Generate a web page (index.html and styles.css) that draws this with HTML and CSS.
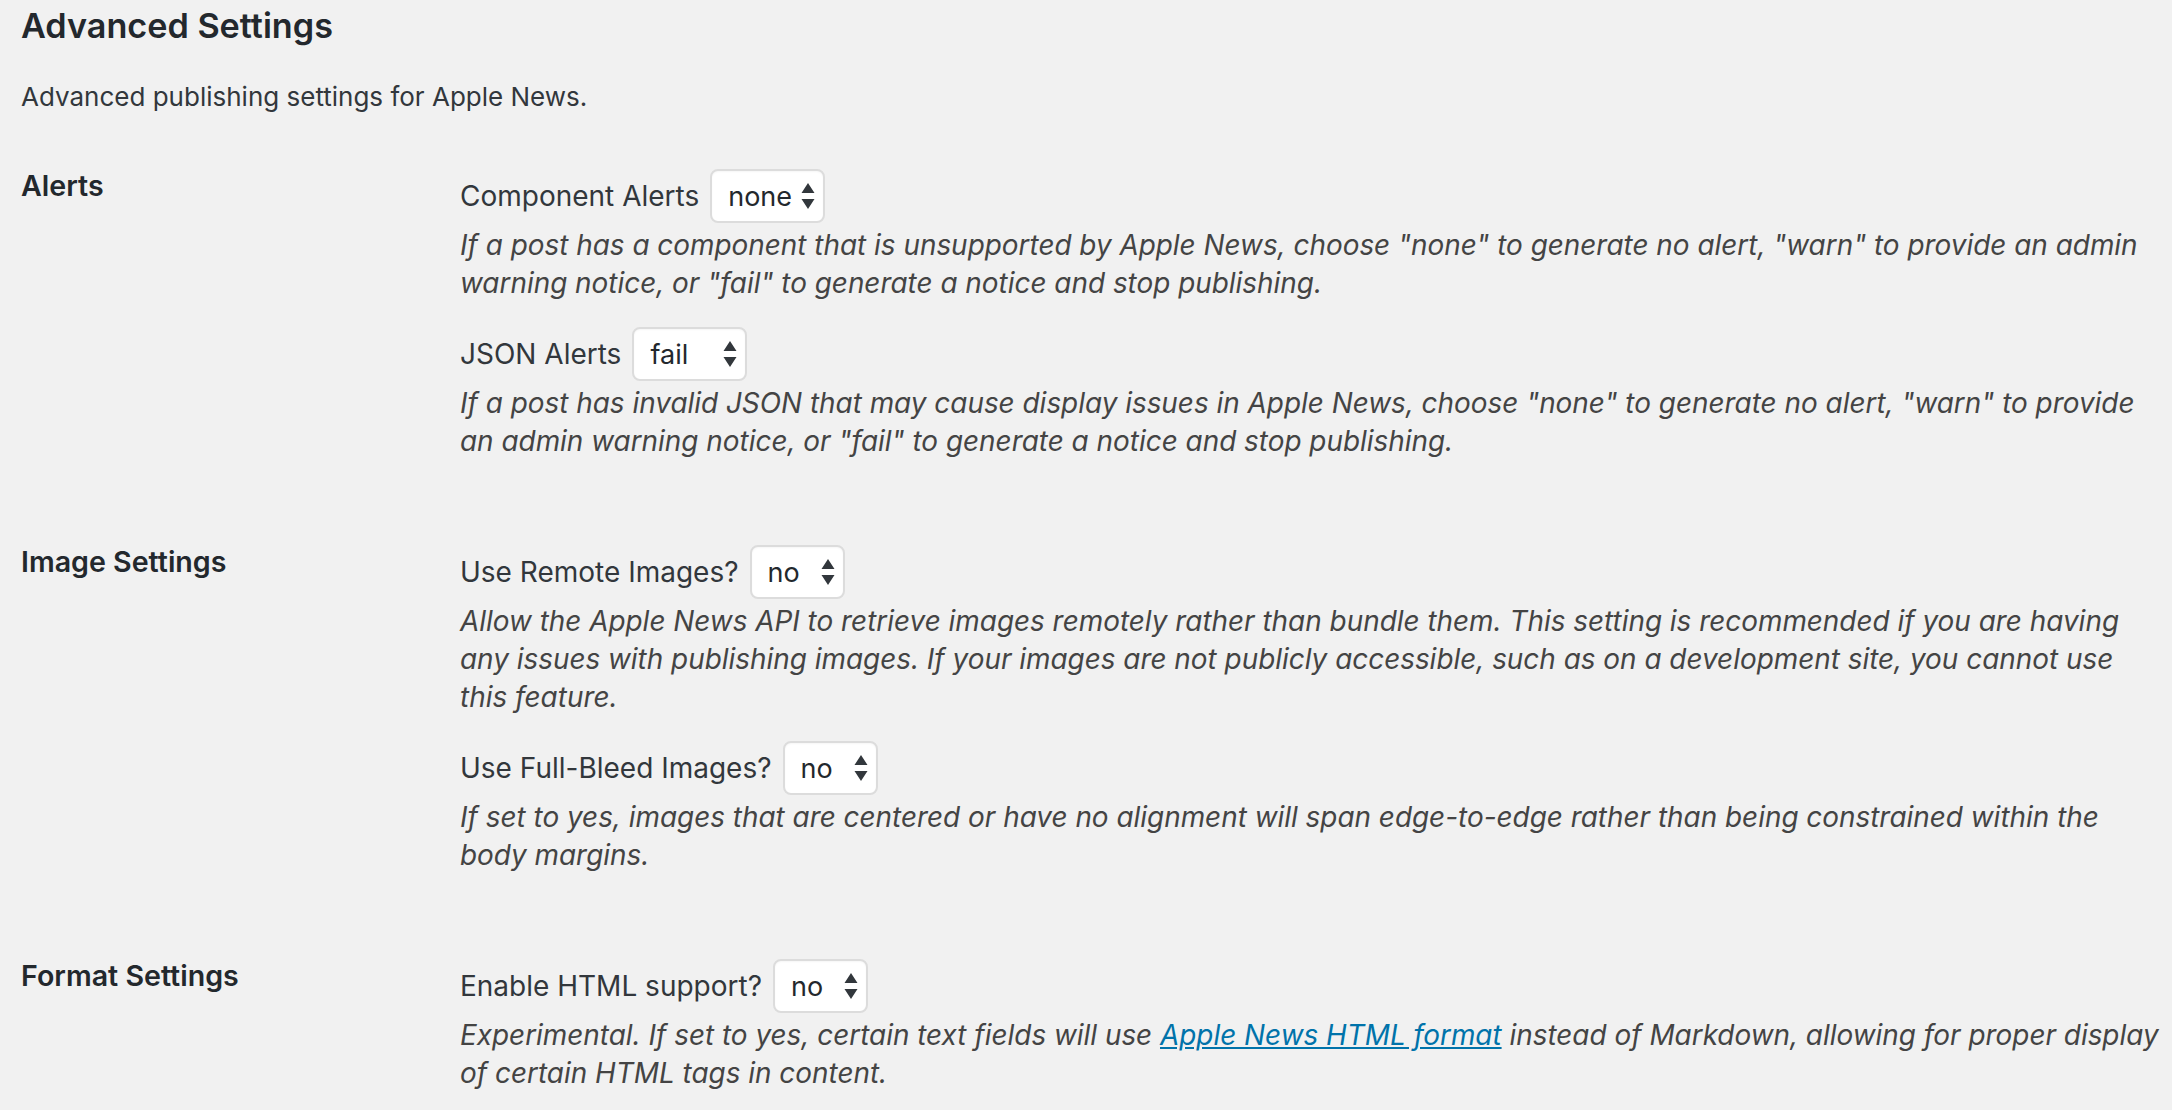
FILE: index.html
```html
<!DOCTYPE html>
<html lang="en">
<head>
<meta charset="utf-8">
<title>Advanced Settings</title>
<link rel="stylesheet" href="styles.css">
</head>
<body>
<div class="wrap">
  <h2 class="title">Advanced Settings</h2>
  <p class="intro">Advanced publishing settings for Apple News.</p>

  <div class="section">
    <div class="th">Alerts</div>
    <div class="td">
      <div class="field">
        <span class="label">Component Alerts</span>
        <span class="select wide"><span class="value">none</span><svg class="arrows" viewBox="0 0 14 26" width="14" height="26"><path d="M7 0 L13.5 10 L0.5 10 Z M0.5 16 L13.5 16 L7 26 Z"/></svg></span>
      </div>
      <p class="description">If a post has a component that is unsupported by Apple News, choose "none" to generate no alert, "warn" to provide an admin<br>warning notice, or "fail" to generate a notice and stop publishing.</p>
      <div class="field">
        <span class="label">JSON Alerts</span>
        <span class="select wide"><span class="value">fail</span><svg class="arrows" viewBox="0 0 14 26" width="14" height="26"><path d="M7 0 L13.5 10 L0.5 10 Z M0.5 16 L13.5 16 L7 26 Z"/></svg></span>
      </div>
      <p class="description">If a post has invalid JSON that may cause display issues in Apple News, choose "none" to generate no alert, "warn" to provide<br>an admin warning notice, or "fail" to generate a notice and stop publishing.</p>
    </div>
  </div>

  <div class="section">
    <div class="th">Image Settings</div>
    <div class="td">
      <div class="field">
        <span class="label">Use Remote Images?</span>
        <span class="select narrow"><span class="value">no</span><svg class="arrows" viewBox="0 0 14 26" width="14" height="26"><path d="M7 0 L13.5 10 L0.5 10 Z M0.5 16 L13.5 16 L7 26 Z"/></svg></span>
      </div>
      <p class="description">Allow the Apple News API to retrieve images remotely rather than bundle them. This setting is recommended if you are having<br>any issues with publishing images. If your images are not publicly accessible, such as on a development site, you cannot use<br>this feature.</p>
      <div class="field">
        <span class="label">Use Full-Bleed Images?</span>
        <span class="select narrow"><span class="value">no</span><svg class="arrows" viewBox="0 0 14 26" width="14" height="26"><path d="M7 0 L13.5 10 L0.5 10 Z M0.5 16 L13.5 16 L7 26 Z"/></svg></span>
      </div>
      <p class="description">If set to yes, images that are centered or have no alignment will span edge-to-edge rather than being constrained within the<br>body margins.</p>
    </div>
  </div>

  <div class="section">
    <div class="th">Format Settings</div>
    <div class="td">
      <div class="field">
        <span class="label">Enable HTML support?</span>
        <span class="select narrow"><span class="value">no</span><svg class="arrows" viewBox="0 0 14 26" width="14" height="26"><path d="M7 0 L13.5 10 L0.5 10 Z M0.5 16 L13.5 16 L7 26 Z"/></svg></span>
      </div>
      <p class="description">Experimental. If set to yes, certain text fields will use <a href="#">Apple News HTML format</a> instead of Markdown, allowing for proper display<br>of certain HTML tags in content.</p>
    </div>
  </div>
</div>
</body>
</html>
```

FILE: styles.css
```css
html, body {
  margin: 0;
  padding: 0;
  background: #f1f1f1;
}

body {
  font-family: Inter, "Noto Sans", "Liberation Sans", sans-serif;
  color: #32373c;
  font-size: 28px;
}

.wrap {
  padding: 0 0 0 21px;
}

.title {
  margin: 6px 0 0;
  font-size: 34.2px;
  line-height: 40px;
  font-weight: 600;
  color: #23282d;
}

.intro {
  margin: 31px 0 0;
  font-size: 26px;
  line-height: 40px;
  color: #32373c;
}

.section {
  display: grid;
  grid-template-columns: 439px 1fr;
  margin-top: 29px;
}

.section + .section {
  margin-top: 62px;
}

.th {
  padding-top: 20px;
  font-size: 28.6px;
  line-height: 40px;
  font-weight: 600;
  color: #23282d;
}

.td {
  padding-top: 23px;
  min-width: 0;
}

.field {
  display: flex;
  align-items: center;
  gap: 11px;
  height: 54px;
}

.label {
  font-size: 28px;
  color: #32373c;
}

.select {
  box-sizing: border-box;
  height: 54px;
  display: flex;
  align-items: center;
  justify-content: space-between;
  padding: 0 8px 0 16px;
  background: #fff;
  border: 2px solid #dcdcdc;
  border-radius: 8px;
  box-shadow: inset 0 1px 2px rgba(0, 0, 0, 0.04);
  font-size: 27px;
  color: #23282d;
}

.select.wide {
  width: 115px;
}

.select.narrow {
  width: 95px;
}

.arrows {
  fill: #32373c;
  flex: none;
}

.description {
  margin: 4px 0 25px;
  font-size: 27.9px;
  line-height: 37.6px;
  font-style: italic;
  color: #444;
}

.description:last-child {
  margin-bottom: 0;
}

.description a {
  color: #0073aa;
  text-decoration: underline;
}
```
